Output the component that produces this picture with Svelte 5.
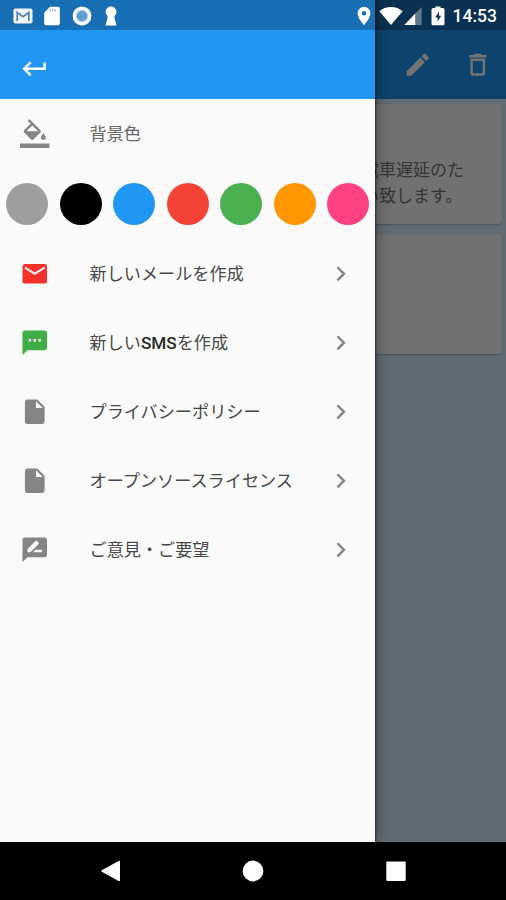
<script lang="ts">
  type MenuItem = { label: string; icon: string; tint: string };

  const icons: Record<string, string> = {
    back: 'M19 7v4H5.83l3.58-3.59L8 6l-6 6 6 6 1.41-1.41L5.83 13H21V7z',
    fill: 'M16.56 8.94L7.62 0 6.21 1.41l2.38 2.38-5.15 5.15c-.59.59-.59 1.54 0 2.12l5.5 5.5c.29.29.68.44 1.06.44s.77-.15 1.06-.44l5.5-5.5c.59-.58.59-1.53 0-2.12zM5.21 10L10 5.21 14.79 10H5.21zM19 11.5s-2 2.17-2 3.5c0 1.1.9 2 2 2s2-.9 2-2c0-1.33-2-3.5-2-3.5zM0 20h24v4H0z',
    mail: 'M20 4H4c-1.1 0-1.99.9-1.99 2L2 18c0 1.1.9 2 2 2h16c1.1 0 2-.9 2-2V6c0-1.1-.9-2-2-2zm0 4l-8 5-8-5V6l8 5 8-5v2z',
    sms: 'M20 2H4c-1.1 0-1.99.9-1.99 2L2 22l4-4h14c1.1 0 2-.9 2-2V4c0-1.1-.9-2-2-2zM9 11H7V9h2v2zm4 0h-2V9h2v2zm4 0h-2V9h2v2z',
    file: 'M6 2c-1.1 0-1.99.9-1.99 2L4 20c0 1.1.89 2 1.99 2H18c1.1 0 2-.9 2-2V8l-6-6H6zm7 7V3.5L18.5 9H13z',
    review: 'M20 2H4c-1.1 0-1.99.9-1.99 2L2 22l4-4h14c1.1 0 2-.9 2-2V4c0-1.1-.9-2-2-2zM6 14v-2.47l6.88-6.88c.2-.2.51-.2.71 0l1.77 1.77c.2.2.2.51 0 .71L8.47 14H6zm12 0h-7.5l2-2H18v2z',
    chevron: 'M10 6L8.59 7.41 13.17 12l-4.58 4.59L10 18l6-6z',
    edit: 'M3 17.25V21h3.75L17.81 9.94l-3.75-3.75L3 17.25zM20.71 7.04c.39-.39.39-1.02 0-1.41l-2.34-2.34c-.39-.39-1.02-.39-1.41 0l-1.83 1.83 3.75 3.75 1.83-1.83z',
    trash: 'M6 19c0 1.1.9 2 2 2h8c1.1 0 2-.9 2-2V7H6v12zM8 9h8v10H8V9zm7.5-5l-1-1h-5l-1 1H5v2h14V4z'
  };

  const colors = ['#9e9e9e', '#000000', '#2196f3', '#f44336', '#4caf50', '#ff9800', '#ff4081'];

  const items: MenuItem[] = [
    { label: '新しいメールを作成', icon: 'mail', tint: 'red' },
    { label: '新しいSMSを作成', icon: 'sms', tint: 'green' },
    { label: 'プライバシーポリシー', icon: 'file', tint: 'grey' },
    { label: 'オープンソースライセンス', icon: 'file', tint: 'grey' },
    { label: 'ご意見・ご要望', icon: 'review', tint: 'grey' }
  ];

  // odd entries are the latin runs, set in medium weight
  function splitLatin(label: string): string[] {
    return label.split(/([A-Za-z]+)/);
  }
</script>

{#snippet icon(name: string, tint: string)}
  <svg class="icon {tint}" viewBox="0 0 24 24"><path d={icons[name]} /></svg>
{/snippet}

<div class="screen">
  <div class="page">
    <header class="page-bar">
      {@render icon('edit', 'white')}
      {@render icon('trash', 'white')}
    </header>
    <main class="cards">
      <article class="card">
        <p>電車遅延のた<br />い致します。</p>
      </article>
      <article class="card"></article>
    </main>
  </div>

  <div class="scrim"></div>

  <aside class="drawer">
    <header class="drawer-bar">
      {@render icon('back', 'white')}
    </header>
    <div class="row heading">
      {@render icon('fill', 'grey')}
      <span class="label">背景色</span>
    </div>
    <div class="swatches">
      {#each colors as color}
        <button class="swatch" style="background: {color}" aria-label={color}></button>
      {/each}
    </div>
    <nav>
      {#each items as item}
        <div class="row">
          {@render icon(item.icon, item.tint)}
          <span class="label">{#each splitLatin(item.label) as part, i}<span class:latin={i % 2 === 1}>{part}</span>{/each}</span>
          {@render icon('chevron', 'grey')}
        </div>
      {/each}
    </nav>
  </aside>

  <div class="status">
    <div class="notifications">
      <svg width="20" height="20" viewBox="0 0 20 20">
        <rect x="0.5" y="2.5" width="19" height="15" rx="2" fill="#f2f6fc" />
        <path d="M4.2 15V6.5l5.8 4.3 5.8-4.3V15" fill="none" stroke="#4d80b5" stroke-width="1.7" />
      </svg>
      <svg width="16" height="20" viewBox="0 0 16 20">
        <path d="M6 .8h8a1.8 1.8 0 0 1 1.8 1.8v14.8a1.8 1.8 0 0 1-1.8 1.8H2a1.8 1.8 0 0 1-1.8-1.8V6.8z" fill="#fff" />
        <path d="M6 3v2.5M8.5 3v2.5M11 3v2.5" stroke="#7ba5d0" stroke-width="1.1" />
      </svg>
      <svg width="20" height="20" viewBox="0 0 20 20">
        <circle cx="10" cy="10" r="9.4" fill="#fff" />
        <circle cx="10" cy="10" r="5.6" fill="#5f9dcb" stroke="#a7cbe7" stroke-width="1.2" />
      </svg>
      <svg class="keyhole" width="14" height="20" viewBox="0 0 14 20">
        <path d="M7 .4a5.4 5.4 0 0 1 3.8 9.2l-.4 2.4 2.2 7.4H1.4L3.6 12l-.4-2.4A5.4 5.4 0 0 1 7 .4z" fill="#fff" />
      </svg>
    </div>
    <div class="system">
      <svg width="14" height="20" viewBox="0 0 14 20">
        <path d="M7 .8A6.4 6.4 0 0 0 .6 7.2C.6 12 7 19.2 7 19.2s6.4-7.2 6.4-12A6.4 6.4 0 0 0 7 .8zm0 4.1a2.3 2.3 0 1 1 0 4.6 2.3 2.3 0 0 1 0-4.6z" fill="#fff" />
      </svg>
      <svg class="wifi" width="24" height="20" viewBox="0 0 24 20">
        <path d="M12 19L.4 5.2C3.4 2.5 7.5 1 12 1s8.6 1.5 11.6 4.2z" fill="#fff" />
      </svg>
      <svg class="signal" width="18" height="20" viewBox="0 0 18 20">
        <path d="M17.6 1v18H.4z" fill="#fff" opacity=".35" />
        <path d="M11.2 7.7V19H.4z" fill="#fff" />
      </svg>
      <svg class="battery" width="14" height="20" viewBox="0 0 14 20">
        <path d="M4.5.6h5v1.5H12a1.5 1.5 0 0 1 1.5 1.5v14.2a1.5 1.5 0 0 1-1.5 1.5H2A1.5 1.5 0 0 1 .5 17.8V3.6A1.5 1.5 0 0 1 2 2.1h2.5z" fill="#fff" />
        <path d="M8 5.5L4.2 11.6h2.4v4.2L10.2 9.7H8z" fill="#12375c" />
      </svg>
      <span class="time">14:53</span>
    </div>
  </div>

  <footer class="navbar">
    <svg width="22" height="22" viewBox="0 0 22 22"><path d="M1.8 10.2L18.6.9Q20 .4 20 1.7v18.6q0 1.3-1.4.8L1.8 11.8q-1.2-.8 0-1.6z" /></svg>
    <svg width="22" height="22" viewBox="0 0 22 22"><circle cx="11" cy="11" r="10.4" /></svg>
    <svg width="22" height="22" viewBox="0 0 22 22"><rect x="1.3" y="1.6" width="19.4" height="19.4" rx="1" /></svg>
  </footer>
</div>

<style>
:global(body) {
  margin: 0;
}

.screen {
  position: relative;
  display: flex;
  flex-direction: column;
  width: 506px;
  height: 900px;
  overflow: hidden;
  font-family: Roboto, "Noto Sans CJK JP", sans-serif;
}

svg {
  display: block;
  flex: none;
}

.icon {
  width: 29.5px;
  height: 29.5px;
}

.white {
  fill: #fff;
}

.grey {
  fill: #858585;
}

.red {
  fill: #f3322b;
}

.green {
  fill: #41ad48;
}

/* page under the drawer */
.page {
  flex: 1;
  background: #d8eeff;
}

.page-bar {
  box-sizing: border-box;
  height: 99px;
  padding: 30px 14px 0 0;
  display: flex;
  align-items: center;
  justify-content: flex-end;
  gap: 30.5px;
  background: #2196f3;
}

.cards {
  display: flex;
  flex-direction: column;
  gap: 10px;
  padding: 5px 4px;
}

.card {
  box-sizing: border-box;
  height: 120px;
  padding: 53px 0 0 358px;
  border-radius: 4px;
  background: #fafafa;
  box-shadow: 0 1px 2px rgba(0, 0, 0, 0.25);
}

.card p {
  margin: 0;
  font-size: 17px;
  line-height: 26px;
  color: #777;
  white-space: nowrap;
}

.scrim {
  position: absolute;
  inset: 0 0 58px;
  background: rgba(0, 0, 0, 0.55);
}

.drawer {
  position: absolute;
  top: 0;
  left: 0;
  width: 375px;
  height: 842px;
  background: #fafafa;
  box-shadow: 0 0 16px rgba(0, 0, 0, 0.4), 1px 0 2px rgba(0, 0, 0, 0.5);
}

.drawer-bar {
  box-sizing: border-box;
  height: 99px;
  padding: 54px 20px 0;
  background: #2196f3;
}

.row {
  box-sizing: border-box;
  height: 69px;
  padding: 0 20px;
  display: flex;
  align-items: center;
}

.label {
  flex: 1;
  margin-left: 40px;
  font-size: 17.15px;
  line-height: 26px;
  color: #484848;
}

.latin {
  font-weight: 500;
  color: #2a2a2a;
}

.heading .label {
  color: #666;
}

.swatches {
  display: flex;
  align-items: center;
  justify-content: space-between;
  height: 71px;
  padding: 0 6px;
}

.swatch {
  width: 42px;
  height: 42px;
  padding: 0;
  border: none;
  border-radius: 50%;
}

/* system chrome */
.status {
  box-sizing: border-box;
  position: absolute;
  inset: 0 0 auto;
  height: 30px;
  padding-top: 1px;
  display: flex;
  align-items: center;
  justify-content: space-between;
  background: rgba(0, 0, 0, 0.26);
}

.notifications {
  display: flex;
  align-items: center;
  gap: 11.5px;
  padding-left: 12.5px;
}

.keyhole {
  margin-left: 1px;
}

.system {
  display: flex;
  align-items: center;
  padding-right: 9px;
}

.wifi {
  margin-left: 8px;
}

.signal {
  margin-left: 1px;
}

.battery {
  margin-left: 9px;
}

.time {
  margin-left: 8px;
  font-size: 17.5px;
  font-weight: 500;
  line-height: 30px;
  color: #fff;
}

.navbar {
  display: flex;
  align-items: center;
  justify-content: center;
  gap: 120.5px;
  height: 58px;
  background: #000;
}

.navbar svg {
  fill: #fff;
}
</style>
